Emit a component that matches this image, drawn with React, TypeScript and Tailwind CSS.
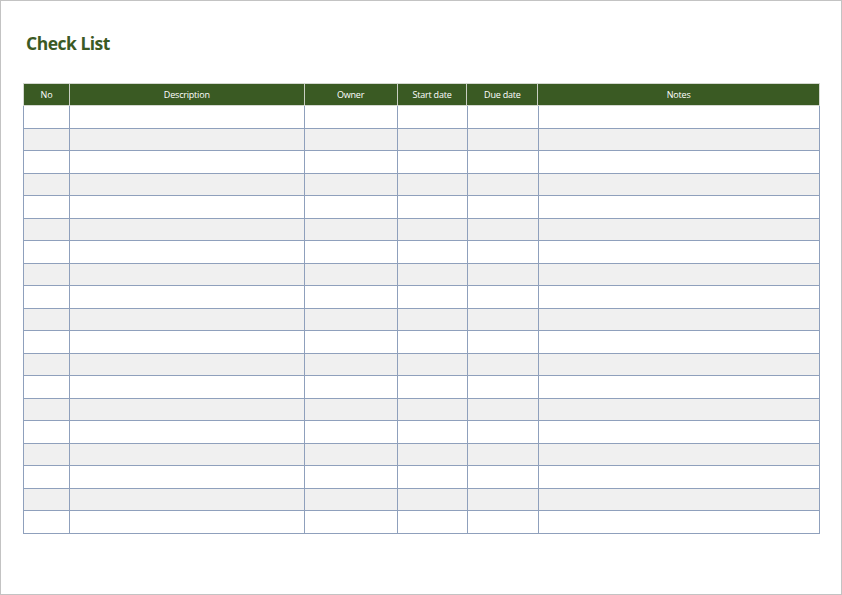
import React from "react";

const cols = [
  { name: "No", w: "w-[46px]" },
  { name: "Description", w: "w-[235px]" },
  { name: "Owner", w: "w-[93px]" },
  { name: "Start date", w: "w-[70px]" },
  { name: "Due date", w: "w-[71px]" },
  { name: "Notes", w: "w-[281px]" },
];

export default function App() {
  const rows = Array.from({ length: 19 }, (_, i) => i);
  return (
    <div
      className="w-[842px] h-[595px] border border-[#c3c3c3] bg-white"
      style={{ fontFamily: '"Open Sans", "Noto Sans", sans-serif' }}
    >
      <div className="pl-[25px] pt-[29px] h-[82px]">
        <h1 className="text-[17.5px] leading-[26px] font-bold text-[#3b5a24] tracking-[-0.5px]">
          Check List
        </h1>
      </div>
      <div className="ml-[22px] w-[797px]">
        <div className="flex h-[23px] bg-[#3a5a23] border border-[#d4d8d0]">
          {cols.map((c, i) => (
            <div
              key={c.name}
              className={`${c.w} flex items-center justify-center text-white text-[9px] tracking-[-0.2px] ${
                i < cols.length - 1 ? "border-r border-[#c9cfc3]" : ""
              }`}
            >
              {c.name}
            </div>
          ))}
        </div>
        <div className="border-l border-[#8fa0bc]">
          {rows.map((r) => (
            <div
              key={r}
              className={`flex h-[22.5px] border-b border-[#8fa0bc] ${
                r % 2 === 1 ? "bg-[#f0f0f0]" : "bg-white"
              }`}
            >
              {cols.map((c) => (
                <div key={c.name} className={`${c.w} border-r border-[#8fa0bc]`} />
              ))}
            </div>
          ))}
        </div>
      </div>
    </div>
  );
}
